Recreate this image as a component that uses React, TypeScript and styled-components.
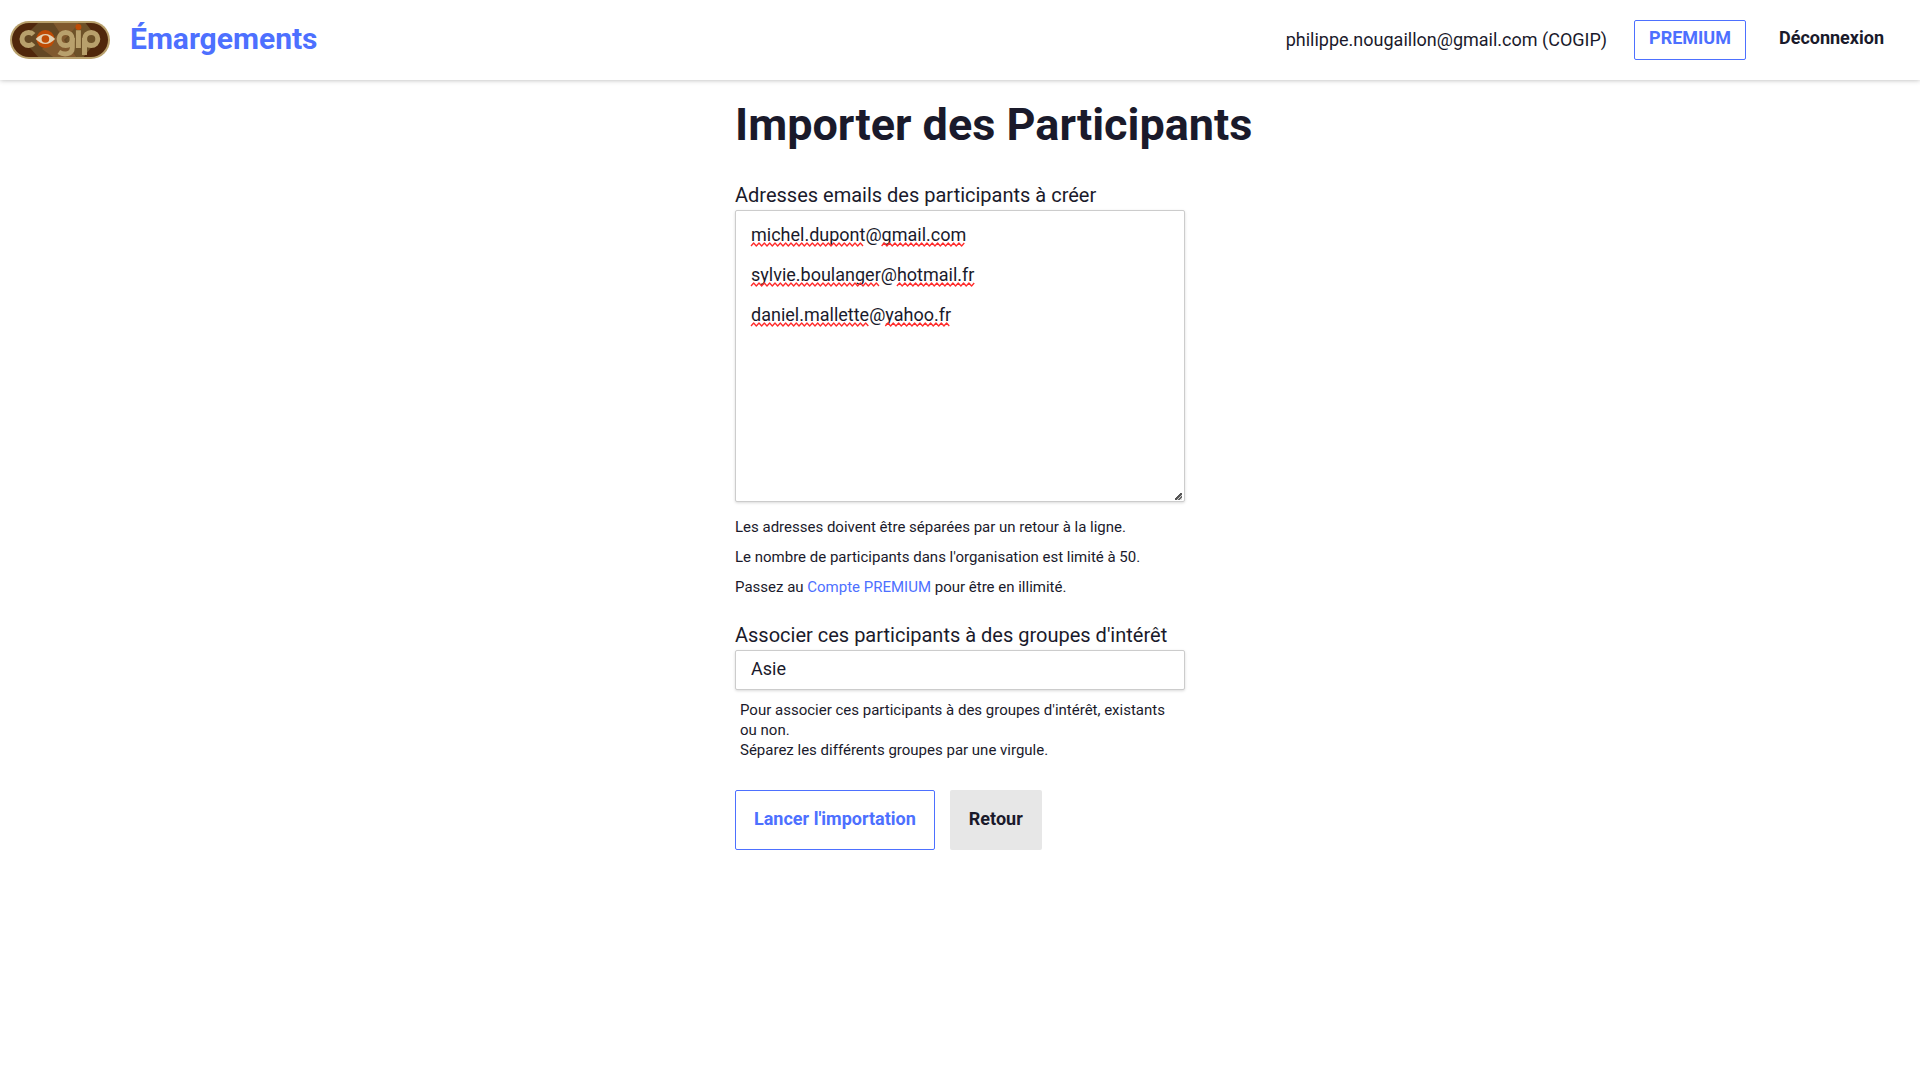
import React, { useLayoutEffect, useRef, useState } from "react";
import styled, { createGlobalStyle } from "styled-components";

const ink = "#1a1a2b";
const blue = "#4d70ff";

const GlobalStyle = createGlobalStyle`
  *, *::before, *::after { box-sizing: border-box; }
  body {
    margin: 0;
    background: #fff;
    color: ${ink};
    font: 400 18px/40px Roboto, "Liberation Sans", sans-serif;
  }
  a { color: ${blue}; text-decoration: none; }
`;

const Header = styled.header`
  display: flex;
  align-items: center;
  justify-content: space-between;
  height: 80px;
  padding: 0 10px;
  box-shadow: 0 0 5px rgba(0, 0, 0, 0.3);
`;

const Brand = styled.a`
  display: flex;
  align-items: center;
  gap: 20px;
  font-size: 30px;
  font-weight: 700;
`;

const BrandName = styled.span`
  padding-bottom: 2px;
`;

const Nav = styled.nav`
  display: flex;
  align-items: center;
  gap: 10px;
`;

const Account = styled.span`
  padding-right: 17px;
`;

const Button = styled.button<{ $kind: "outline" | "plain" | "grey"; $large?: boolean }>`
  height: ${(p) => (p.$large ? 60 : 40)}px;
  padding: ${(p) => (p.$large ? "0 18px 3px" : "0 14px 4px")};
  border: 1px solid ${(p) => (p.$kind === "outline" ? blue : "transparent")};
  border-radius: 2px;
  background: ${(p) => (p.$kind === "grey" ? "#e7e7e7" : "transparent")};
  color: ${(p) => (p.$kind === "outline" ? blue : ink)};
  font: inherit;
  font-weight: 700;
  line-height: 30px;
  cursor: pointer;
`;

const LogoutButton = styled(Button)`
  padding: 0 25px 4px 22px;
`;

const Main = styled.main`
  width: 450px;
  max-width: calc(100% - 40px);
  margin: 0 auto;
`;

const Title = styled.h1`
  margin: 0;
  padding: 15px 0 20px;
  font-size: 45px;
  line-height: 60px;
  font-weight: 700;
  white-space: nowrap;
`;

const Form = styled.form`
  display: flex;
  flex-direction: column;
`;

const Label = styled.label`
  padding-top: 5px;
  font-size: 20px;
  line-height: 30px;
`;

const fieldStyle = `
  display: block;
  width: 100%;
  border: 1px solid #ccc;
  border-radius: 2px;
  background: #fff;
  box-shadow: 0 1px 3px rgba(0, 0, 0, 0.15);
  color: ${ink};
  font: inherit;
  outline: none;
`;

const AreaWrap = styled.div`
  position: relative;
`;

const Area = styled.textarea`
  ${fieldStyle}
  height: 292px;
  padding: 4px 15px;
  line-height: 40px;
  resize: vertical;

  &::-webkit-resizer {
    background: linear-gradient(135deg, transparent 42%, #555 42% 58%, #ccc 58% 70%, #666 70% 84%, #ddd 84%)
      right 2px bottom 1px / 7px 7px no-repeat;
  }
`;

const Input = styled.input`
  ${fieldStyle}
  height: 40px;
  padding: 0 15px 2px;
`;

const Marks = styled.svg`
  position: absolute;
  inset: 0;
  width: 100%;
  height: 100%;
  pointer-events: none;
`;

const Notes = styled.div`
  padding: 10px 0 13px;
  font-size: 15px;
  line-height: 30px;
`;

const Note = styled.p`
  margin: 0;
`;

const Hint = styled.p`
  margin: 0;
  padding: 10px 5px 30px;
  font-size: 15px;
  line-height: 20px;
`;

const Actions = styled.div`
  display: flex;
  gap: 15px;
`;

function Logo() {
  return (
    <svg width="100" height="38" viewBox="0 0 100 38" role="img" aria-label="cogip">
      <defs>
        <clipPath id="pill"><rect x="2" y="2" width="96" height="34" rx="17" /></clipPath>
      </defs>
      <rect width="100" height="38" rx="19" fill="#b8a06c" />
      <g clipPath="url(#pill)">
        <rect width="100" height="38" fill="#50270c" />
        <path d="M30 0 12 18l18 20h40V0z" fill="#644824" />
        <path d="M42 0h30L54 19l14 19H46L32 28 50 12z" fill="#80592e" />
        <path d="M70 0h4l14 18-16 20h-4L56 19z" fill="#6d5128" />
      </g>
      <g fill="none" stroke="#b8a06c" strokeWidth="5">
        <path d="M23.500 13.600A6.600 6.600 0 1 0 23.500 22.400" />
        <circle cx="55.700" cy="18" r="6.600" />
        <path d="M62.300 17v9.500c0 7-8 8-13.500 4.500M68.400 9.300V27M74.500 17v17" />
        <circle cx="81.200" cy="18" r="6.600" />
      </g>
      <circle cx="68.400" cy="6" r="3" fill="#c04c05" />
      <circle cx="35.400" cy="18" r="9" fill="#c04c05" />
      <path d="M25.700 18q9.700-10 19.400 0-9.700 10-19.400 0" fill="#e3d2b4" />
      <circle cx="35.400" cy="18" r="3.800" fill="#c04c05" />
    </svg>
  );
}

type Mark = { x: number; y: number; width: number };

const HALF_WAVE = 8 / 3;

const wave = ({ x, y, width }: Mark) => {
  let d = `M${x} ${y + 3}`;
  for (let i = 1; i * HALF_WAVE <= width; i++) d += `L${x + i * HALF_WAVE} ${i % 2 ? y : y + 3}`;
  return d;
};

function EmailArea() {
  const [value, setValue] = useState(
    "michel.dupont@gmail.com\nsylvie.boulanger@hotmail.fr\ndaniel.mallette@yahoo.fr"
  );
  const [marks, setMarks] = useState<Mark[]>([]);
  const area = useRef<HTMLTextAreaElement>(null);

  // Underline every word around the @ sign, line by line.
  useLayoutEffect(() => {
    const ctx = document.createElement("canvas").getContext("2d");
    if (!ctx || !area.current) return;
    const style = getComputedStyle(area.current);
    ctx.font = `${style.fontSize} ${style.fontFamily}`;
    const found: Mark[] = [];
    value.split("\n").forEach((line, row) => {
      for (const m of line.matchAll(/[^@\s]+/g)) {
        found.push({
          x: 16 + ctx.measureText(line.slice(0, m.index)).width,
          y: 33 + row * 40,
          width: ctx.measureText(m[0]).width,
        });
      }
    });
    setMarks(found);
  }, [value]);

  return (
    <AreaWrap>
      <Area id="emails" ref={area} spellCheck={false} value={value} onChange={(e) => setValue(e.target.value)} />
      <Marks aria-hidden="true">
        {marks.map((m, i) => (
          <path key={i} d={wave(m)} fill="none" stroke="#ff2a2a" strokeWidth="1.300" strokeLinejoin="round" />
        ))}
      </Marks>
    </AreaWrap>
  );
}

export default function App() {
  return (
    <>
      <GlobalStyle />
      <Header>
        <Brand href="#"><Logo /><BrandName>Émargements</BrandName></Brand>
        <Nav>
          <Account>philippe.nougaillon@gmail.com (COGIP)</Account>
          <Button type="button" $kind="outline">PREMIUM</Button>
          <LogoutButton type="button" $kind="plain">Déconnexion</LogoutButton>
        </Nav>
      </Header>
      <Main>
        <Title>Importer des Participants</Title>
        <Form onSubmit={(e) => e.preventDefault()}>
          <Label htmlFor="emails">Adresses emails des participants à créer</Label>
          <EmailArea />
          <Notes>
            <Note>Les adresses doivent être séparées par un retour à la ligne.</Note>
            <Note>Le nombre de participants dans l'organisation est limité à 50.</Note>
            <Note>Passez au <a href="#">Compte PREMIUM</a> pour être en illimité.</Note>
          </Notes>
          <Label htmlFor="groups">Associer ces participants à des groupes d'intérêt</Label>
          <Input id="groups" type="text" defaultValue="Asie" />
          <Hint>
            Pour associer ces participants à des groupes d'intérêt, existants ou non.
            <br />
            Séparez les différents groupes par une virgule.
          </Hint>
          <Actions>
            <Button type="submit" $kind="outline" $large>Lancer l'importation</Button>
            <Button type="button" $kind="grey" $large>Retour</Button>
          </Actions>
        </Form>
      </Main>
    </>
  );
}
